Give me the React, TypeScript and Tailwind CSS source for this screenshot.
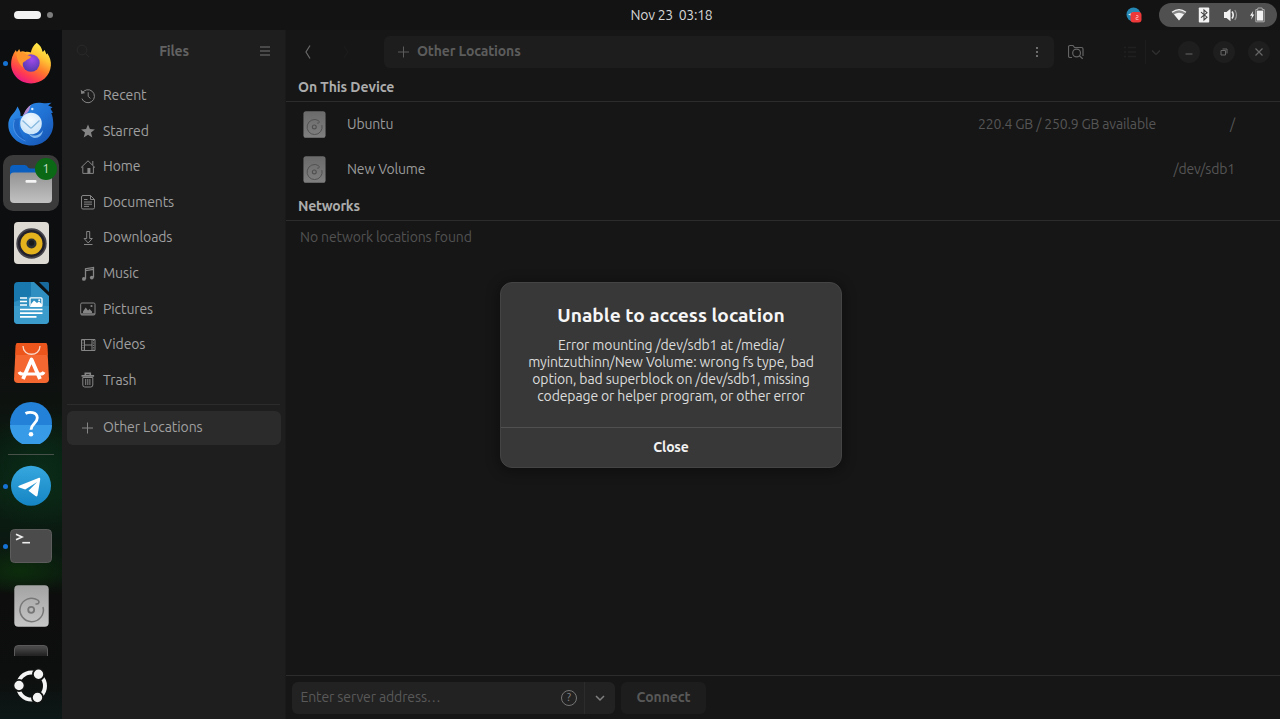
import React, { ReactNode } from "react";

type SvgProps = { className?: string; children?: ReactNode };

function Line({ className = "", children }: SvgProps) {
  return (
    <svg
      viewBox="0 0 16 16"
      width="16"
      height="16"
      fill="none"
      stroke="currentColor"
      strokeWidth="1"
      className={`shrink-0 ${className}`}
    >
      {children}
    </svg>
  );
}

const PlusIcon = ({ className = "" }: SvgProps) => (
  <Line className={className}>
    <path d="M7.500 2.500v11M2 8h11" />
  </Line>
);

const places: { name: string; icon: ReactNode }[] = [
  {
    name: "Recent",
    icon: (
      <Line>
        <path d="M2.200 5.200A6.500 6.500 0 1 1 1.900 10.600M8.200 4.200V8.400L10.400 10.400" />
        <path d="M.7 1.800l.6 4.100 4-.8z" fill="currentColor" stroke="none" />
      </Line>
    ),
  },
  {
    name: "Starred",
    icon: (
      <Line>
        <path
          d="M8 1.400l1.900 4.700 5 .3-3.900 3.200 1.300 4.900L8 11.800l-4.300 2.700L5 9.600 1.100 6.400l5-.3z"
          fill="currentColor"
          stroke="none"
        />
      </Line>
    ),
  },
  {
    name: "Home",
    icon: (
      <Line>
        <path d="M1 8.600L8 1.800l7 6.800M2.800 7.500v6.900h10.600V7.500M12.800 2v4" />
        <path d="M7.400 9h3v5.400h-3z" fill="currentColor" stroke="none" />
      </Line>
    ),
  },
  {
    name: "Documents",
    icon: (
      <Line>
        <path d="M3 1.500h7.500l4 4v8a1.500 1.500 0 0 1-1.500 1.500H3a1.500 1.500 0 0 1-1.500-1.500V3A1.500 1.500 0 0 1 3 1.500zM10.500 1.500v4h4M4 5.500h3.500M4 8h8M4 10.200h8M4 12.400h5" />
      </Line>
    ),
  },
  {
    name: "Downloads",
    icon: (
      <Line>
        <path d="M6.700 1.500h3v7h2.600L8.200 13 4.100 8.500h2.600zM4 14.500h8.500" />
      </Line>
    ),
  },
  {
    name: "Music",
    icon: (
      <Line>
        <path d="M5.500 13V2.700L13.500 1.500v10M5.500 4.600l8-1.200" strokeWidth="1.300" />
        <circle cx="3.900" cy="12.900" r="1.900" fill="currentColor" stroke="none" />
        <circle cx="11.800" cy="11.600" r="1.900" fill="currentColor" stroke="none" />
      </Line>
    ),
  },
  {
    name: "Pictures",
    icon: (
      <Line>
        <rect x=".7" y="2" width="14.300" height="12" rx="1.200" />
        <path d="M1 12h14v2H1z" fill="currentColor" stroke="none" opacity=".7" />
        <path d="M3 12v-1.500L5.700 6.500l2.300 3 1.500-1.500L12 10.500V12z" fill="currentColor" stroke="none" />
        <circle cx="11.500" cy="5" r="1.100" fill="currentColor" stroke="none" />
      </Line>
    ),
  },
  {
    name: "Videos",
    icon: (
      <Line>
        <path d="M1.500 2.500h13.500v11H1.500zM4.500 2.500v11M12 2.500v11M4.500 8H12" />
        <path d="M3 3v11M13.600 3v11" strokeDasharray="1.200 1.200" />
      </Line>
    ),
  },
  {
    name: "Trash",
    icon: (
      <Line>
        <path d="M2.800 5.500h10V13a2 2 0 0 1-2 2h-6a2 2 0 0 1-2-2zM5.700 7v6M7.800 7v6M9.900 7v6" />
        <path d="M1.500 3.900h12.600M5.300 2.900V1.400h5v1.500" strokeWidth="1.600" />
      </Line>
    ),
  },
];

function DriveArt({ className }: { className: string }) {
  return (
    <svg viewBox="0 0 35 42" className={className}>
      <defs>
        <linearGradient id="drive" x1="0" x2="0" y1="0" y2="1">
          <stop offset="0" stopColor="#a3a3a3" />
          <stop offset="1" stopColor="#c6c6c6" />
        </linearGradient>
      </defs>
      <rect x=".3" y=".3" width="34.400" height="41.400" rx="4" fill="url(#drive)" />
      <g fill="none" stroke="#777" strokeWidth="1.500">
        <path d="M23.500 14.800A11.700 11.700 0 1 0 29 22" />
        <path d="M21.500 18.800c3.200 1 4.800-2 2-4" />
        <circle cx="17.200" cy="24.800" r="3" strokeWidth="1.800" />
      </g>
    </svg>
  );
}

function Firefox() {
  return (
    <svg viewBox="0 0 42 42" width="42" height="42">
      <defs>
        <linearGradient id="ff" x1=".85" y1=".05" x2=".3" y2="1">
          <stop offset="0" stopColor="#fff34f" />
          <stop offset=".3" stopColor="#ffc334" />
          <stop offset=".55" stopColor="#ff7a2c" />
          <stop offset=".8" stopColor="#ff3a52" />
          <stop offset="1" stopColor="#e6178c" />
        </linearGradient>
        <radialGradient id="ffg" cx=".55" cy=".3" r=".7">
          <stop offset="0" stopColor="#a04bea" />
          <stop offset="1" stopColor="#5439ad" />
        </radialGradient>
      </defs>
      <path
        d="M26.700.7c3.500 2.400 5.200 5.400 5.800 9 1.200-.2 1.700-1.200 1.800-2 .9 1.300 1.700 3 2 4.800l1-1.200c2.600 4 4 8.200 3.600 12.200C40.100 34 31.700 41.400 21 41.400S1.300 33 1.100 22.200C1 17.500 2.500 12.500 5.800 8l1.100 2.600L9.200 7l1 2.800c1.600-.7 3.500-.8 5.100.1 2-.5 3.900-.2 5.500.5C21.700 6.800 23.500 3 26.700.7z"
        fill="url(#ff)"
      />
      <circle cx="21" cy="21" r="8.700" fill="url(#ffg)" />
      <path d="M6.500 9.500l3.200.6c3.600-.3 6.300 3.200 11.300 4.300-.2 2.700-4.600 2.500-5.600 4.800-2.700.4-3.700 3.600-1.700 6.600-5.400-3.300-7.700-11-7.200-16.300z" fill="#ff962d" />
    </svg>
  );
}

function Thunderbird() {
  return (
    <svg viewBox="0 0 46 44" width="46" height="44" className="translate-y-px">
      <defs>
        <linearGradient id="tb" x1="0" x2="1" y1="0" y2="1">
          <stop offset="0" stopColor="#3090ea" />
          <stop offset=".55" stopColor="#1f70d2" />
          <stop offset="1" stopColor="#1650ad" />
        </linearGradient>
        <radialGradient id="tbe" cx=".5" cy=".35" r=".65">
          <stop offset="0" stopColor="#f2f9ff" />
          <stop offset="1" stopColor="#c9e3f8" />
        </radialGradient>
      </defs>
      <path
        d="M14.500 14C17 11 18 7 21.500 4 25 .8 29 .3 34 1c3 .4 6 .4 9.500-.2l-3.300 2.600 4.300 1.800-2 1.500 2.500 4-1.700.4C44.700 14.300 45.300 18 45.300 22c0 12-9.300 21.500-21.800 21.500S.3 34.500.3 23c0-6 2.900-9.300 5.700-12.500 1.800-2 2.600-4 3.500-6 1.500 3 3.500 5.500 3 9.500z"
        fill="url(#tb)"
      />
      <path d="M16 11.500C18 7 20 4.500 23.300 2.700c-2 2.500-1.300 5-3.300 7.300-1.700 2-4 2.300-5.500 4.500z" fill="#b58bd0" />
      <path d="M6.500 17C4 26 8 34 18 39 11.500 32 9.500 24 12 16z" fill="#1a5fc0" opacity=".7" />
      <path d="M6.500 18c-3.500 10 2.500 17.500 11 21" fill="none" stroke="#6aa6f0" strokeWidth=".8" opacity=".7" />
      <path d="M20 31c5 5 12.500 2 15-3-.5 5-4 8-8 8-2 0-5-1.500-7-5z" fill="#86bdf1" />
      <circle cx="23" cy="21.500" r="10.800" fill="url(#tbe)" />
      <path d="M14.500 18.500l7.500 7q1 .9 2 0l7.500-7" fill="none" stroke="#87b9df" strokeWidth="1.300" />
      <circle cx="24.300" cy="7" r="1.200" fill="#dceefb" />
    </svg>
  );
}

function FilesArt() {
  return (
    <svg viewBox="0 0 42 40" width="42" height="40" className="translate-y-px">
      <defs>
        <linearGradient id="fold" x1="0" x2="0" y1="0" y2="1">
          <stop offset="0" stopColor="#949494" />
          <stop offset="1" stopColor="#c1c1c1" />
        </linearGradient>
      </defs>
      <path d="M0 5a4 4 0 0 1 4-4h10.500c3 0 3 3.500 6 3.500H38a4 4 0 0 1 4 4V20H0z" fill="#0b5fbe" />
      <rect y="8.500" width="42" height="30.500" rx="4" fill="url(#fold)" />
      <rect x="15.500" y="16" width="11" height="2.800" rx="1" fill="#f4f4f4" />
    </svg>
  );
}

function Rhythmbox() {
  return (
    <svg viewBox="0 0 35 42" width="35" height="42">
      <rect width="35" height="42" rx="4" fill="#dddad3" />
      <circle cx="17.500" cy="21.500" r="15.200" fill="#45434a" />
      <circle cx="17.500" cy="21.500" r="13.500" fill="#22202a" />
      <circle cx="17.500" cy="21.500" r="11" fill="#e4b21d" />
      <circle cx="17.500" cy="21.500" r="5" fill="#2b3034" />
      <circle cx="17.500" cy="21" r="2.700" fill="#17191b" />
    </svg>
  );
}

function Writer() {
  return (
    <svg viewBox="0 0 35 42" width="35" height="42">
      <path d="M4 0h14l17 15v23a4 4 0 0 1-4 4H4a4 4 0 0 1-4-4V4a4 4 0 0 1 4-4z" fill="#1978ad" />
      <path d="M17 0h3l15 14v14H0v-8L17 14z" fill="#308fc1" />
      <path d="M0 24h35v14a4 4 0 0 1-4 4H4a4 4 0 0 1-4-4z" fill="#3b9bca" />
      <path d="M25 0h8.500q1.500 0 1.500 1.500V10z" fill="#196a9c" />
      <path d="M6 16h7M6 19.500h7M6 23h7M6 27.500h22.500M6 31.200h22.500M6 34.900h16.500" stroke="#fff" strokeWidth="1.700" />
      <rect x="16" y="15.800" width="12" height="8.600" rx="1" fill="none" stroke="#fff" strokeWidth="1.300" />
      <path d="M17 24v-2l3-3.500 3 2.500 2-1.500 3 3V24z" fill="#fff" />
      <circle cx="25.200" cy="18.300" r="1" fill="#fff" />
    </svg>
  );
}

function AppCenter() {
  return (
    <svg viewBox="0 0 35 40" width="35" height="40">
      <path d="M4 0h27q2 0 2.200 2L35 36q0 4-4 4H4q-4 0-4-4L1.800 2Q2 0 4 0z" fill="#f46730" />
      <path d="M4 0h27q2 0 2.200 2l.4 10H1.400L1.800 2Q2 0 4 0z" fill="#ec561d" />
      <path d="M9 3c0 11 17 11 17 0" fill="none" stroke="#f7d8c9" strokeWidth="1.300" />
      <path d="M9 36L17.500 16.500 26 36" fill="none" stroke="#fff" strokeWidth="3.800" strokeLinejoin="round" />
      <path d="M5 29q1 2 3.500 2h18q2.500 0 3.500-2" fill="none" stroke="#fff" strokeWidth="3.200" />
    </svg>
  );
}

function Help() {
  return (
    <svg viewBox="0 0 42 42" width="42" height="42">
      <circle cx="21" cy="21" r="21" fill="#2382d8" />
      <path d="M0 23h42A21 21 0 0 1 0 23z" fill="#379be8" />
      <path d="M15.500 11.500c3.500-2 11.500-1.800 11.800 4.200.2 5.500-6.300 6-6.300 12" fill="none" stroke="#fff" strokeWidth="2.800" />
      <circle cx="21" cy="32.300" r="2.300" fill="#fff" />
    </svg>
  );
}

function Telegram() {
  return (
    <svg viewBox="0 0 42 42" width="42" height="42">
      <defs>
        <linearGradient id="tg" x1="0" x2="0" y1="0" y2="1">
          <stop offset="0" stopColor="#36a7de" />
          <stop offset="1" stopColor="#1685c4" />
        </linearGradient>
      </defs>
      <circle cx="21" cy="20.700" r="20" fill="url(#tg)" />
      <path d="M9 20.700l19.500-7.800c1.200-.4 2 .2 1.700 1.700L27.600 30c-.2 1.500-1 1.700-2.100 1l-7-5.300 8.700-8.600-12 7.500-5.800-2c-1.400-.6-1.400-1.300-.4-1.900z" fill="#fff" />
    </svg>
  );
}

function Terminal() {
  return (
    <svg viewBox="0 0 42 34" width="42" height="34">
      <rect x=".5" y=".5" width="41" height="33" rx="4" fill="#4b4b4b" stroke="#5c5c5c" />
      <path d="M6 5.200l6 2.800-6 2.800" fill="none" stroke="#eee" strokeWidth="1.700" />
      <path d="M12.300 13.700H20" stroke="#eee" strokeWidth="1.600" />
    </svg>
  );
}

function UbuntuMark() {
  return (
    <svg viewBox="0 0 36 36" width="36" height="36">
      <circle cx="18.500" cy="18" r="13.500" fill="none" stroke="#f4f4f4" strokeWidth="4" />
      <g fill="#f4f4f4" stroke="#121413" strokeWidth="1.800">
        <circle cx="6" cy="17.500" r="5.600" />
        <circle cx="25.500" cy="6.300" r="5.600" />
        <circle cx="24.500" cy="29.500" r="5.600" />
      </g>
    </svg>
  );
}

function DockSlot({ running = false, children }: { running?: boolean; children: ReactNode }) {
  return (
    <div className="relative flex h-[60px] shrink-0 items-center justify-center">
      {running && <span className="absolute left-[3px] top-[28px] size-[5px] rounded-full bg-[#1673d4]" />}
      {children}
    </div>
  );
}

function Dock() {
  return (
    <nav className="flex w-[62px] shrink-0 flex-col bg-[radial-gradient(50px_24px_at_20px_540px,#0c2c0c,transparent),radial-gradient(60px_60px_at_40px_440px,#0a2c18,transparent),linear-gradient(180deg,#0d0e0f_0,#0d0e0f_45%,#0e120f_54%,#081c10_62%,#0a2212_67%,#0a1811_74%,#0b1c0f_79%,#0c0d0c_82%,#0d0f0e_94%,#0c1817_100%)] pt-[3px]">
      <DockSlot running><Firefox /></DockSlot>
      <DockSlot><Thunderbird /></DockSlot>
      <DockSlot running>
        <div className="relative flex size-14 items-center justify-center rounded-[10px] bg-[#3b3b3c]">
          <FilesArt />
          <span className="absolute right-[2px] top-[3px] flex size-[22px] items-center justify-center rounded-full bg-[#0b6815] text-[13px] text-[#c9dfca]">1</span>
        </div>
      </DockSlot>
      <DockSlot><Rhythmbox /></DockSlot>
      <DockSlot><Writer /></DockSlot>
      <DockSlot><AppCenter /></DockSlot>
      <DockSlot><Help /></DockSlot>
      <div className="mx-2 my-px h-px shrink-0 bg-[#475149]" />
      <DockSlot running><Telegram /></DockSlot>
      <DockSlot running><Terminal /></DockSlot>
      <DockSlot><DriveArt className="h-[42px] w-[35px]" /></DockSlot>
      <div className="flex h-5 shrink-0 justify-center overflow-hidden pt-[9px]">
        <div className="h-5 w-[34px] rounded-t-[4px] border border-[#5a5a5a] bg-linear-to-b from-[#484848] from-10% to-[#242424] to-50%" />
      </div>
      <DockSlot><UbuntuMark /></DockSlot>
    </nav>
  );
}

function TopBar() {
  return (
    <header className="grid h-[30px] shrink-0 grid-cols-[1fr_auto_1fr] items-center bg-[#131313]">
      <div className="flex items-center gap-[6px] pl-[14px]">
        <span className="h-[8px] w-[27px] rounded-full bg-[#f2f2f2]" />
        <span className="size-[6px] rounded-full bg-[#7d7d7d]" />
      </div>
      <div className="mb-px ml-[63px] flex w-[82px] justify-between whitespace-pre text-[14px] leading-5 tracking-[-0.25px] text-[#d6d6d6]">
        <span>Nov 23</span>
        <span>03:18</span>
      </div>
      <div className="flex items-center justify-end pr-[3px]">
        <svg viewBox="0 0 16 16" width="16" height="16" className="mr-[17px]">
          <circle cx="7.500" cy="7.500" r="7" fill="#2688b5" />
          <path d="M2 7.500l5-2v4z" fill="#dcecf3" />
          <rect x="4.500" y="5" width="11" height="10.500" rx="3" fill="#ed3939" />
          <path d="M10 8.500h2v2h-2v2h2.500" fill="none" stroke="#ffb2b2" strokeWidth=".8" />
        </svg>
        <div className="flex h-6 w-[118px] items-center rounded-full bg-[#505050] pl-3 text-[#f2f2f2]">
          <svg viewBox="0 0 16 16" width="16" height="16">
            <path d="M1 5.500Q8 .1 15 5.500L8 13.500z" fill="currentColor" opacity=".35" />
            <path d="M3 7.200Q8 4.200 13 7.200L8 13.500z" fill="currentColor" />
            <path d="M1 5.300Q8-.1 15 5.300" fill="none" stroke="currentColor" strokeWidth="1.200" />
          </svg>
          <svg viewBox="0 0 12 16" width="12" height="16" className="ml-[11px]">
            <rect x=".8" y=".5" width="10.400" height="15" rx=".8" fill="currentColor" />
            <path d="M3 5.200l6 5-3 2.800V3l3 2.700-6 5" fill="none" stroke="#444" strokeWidth="1.100" />
          </svg>
          <svg viewBox="0 0 16 16" width="16" height="16" className="ml-[13px]">
            <path d="M1 5h2.500L7.500 1.700v12.600L3.500 11H1z" fill="currentColor" />
            <path d="M9 4.500q2.400 3.500 0 7" fill="none" stroke="currentColor" strokeWidth="1.600" />
            <path d="M11.800 3q3.400 5 0 10" fill="none" stroke="#999" strokeWidth="1.200" />
          </svg>
          <svg viewBox="0 0 16 16" width="16" height="16" className="ml-[10px]">
            <path d="M4.200 4L1 8.700h2L2.100 12.500 5.300 7.500H3.500z" fill="currentColor" />
            <path d="M6.800 2.500h2V1h4.400v1.500h2v12.300H6.800z" fill="none" stroke="#aaa" strokeWidth="1" />
            <rect x="7.900" y="3.600" width="6.200" height="10" fill="currentColor" />
          </svg>
        </div>
      </div>
    </header>
  );
}

function Sidebar() {
  return (
    <aside className="flex w-56 shrink-0 flex-col border-r border-[#1a1a1a] bg-[#1e1e1e] text-[#a0a0a0]">
      <div className="flex h-[42px] shrink-0 items-center justify-between pl-[13px] pr-[12px]">
        <Line className="text-[#292929]"><circle cx="7" cy="7" r="4.800" /><path d="M10.500 10.500L14 14" /></Line>
        <span className="text-[14px] font-semibold tracking-[-0.2px] text-[#626262]">Files</span>
        <Line className="text-[#747474]"><path d="M3 4h10M3 8h10M3 12h10" /></Line>
      </div>
      <ul className="mt-[6px]">
        {places.map((p) => (
          <li key={p.name} className="flex h-[35.560px] items-center pl-[18px] text-[14px] tracking-[-0.1px]">
            <span className="text-[#858585]">{p.icon}</span>
            <span className="ml-[7px]">{p.name}</span>
          </li>
        ))}
      </ul>
      <div className="mx-[5px] mt-[6px] h-px bg-[#2c2c2c]" />
      <div className="ml-[5px] mr-1 mt-[6px] flex h-[34px] items-center rounded-md bg-[#2b2b2b] pl-[13px] text-[14px] tracking-[-0.08px]">
        <PlusIcon className="text-[#858585]" />
        <span className="ml-[7px]">Other Locations</span>
      </div>
    </aside>
  );
}

function WindowButton({ children }: SvgProps) {
  return (
    <span className="flex size-[22px] items-center justify-center rounded-full bg-[#1e1e1e] text-[#666]">
      <Line>{children}</Line>
    </span>
  );
}

function Volume({ name, space, mount }: { name: string; space?: string; mount: string }) {
  return (
    <div className="flex h-[45px] items-center pl-[17px] pr-[45px] text-[14px] tracking-[-0.16px]">
      <DriveArt className="h-[27px] w-[23px] opacity-60" />
      <span className="ml-[21px] text-[#9b9b9b]">{name}</span>
      <span className="ml-auto text-[#555]">{space}</span>
      <span className="w-[79px] text-right text-[#555]">{mount}</span>
    </div>
  );
}

function Browser() {
  return (
    <main className="flex min-w-0 flex-1 flex-col bg-[#161616]">
      <div className="flex h-[43px] shrink-0 items-center pl-[14px] pr-[10.500px]">
        <Line className="text-[#696969]"><path d="M10 1.500L6 8l4 6.500" strokeWidth="1.200" /></Line>
        <Line className="ml-[22px] text-[#1d1d1d]"><path d="M6 2l4 6-4 6" /></Line>
        <div className="ml-[30px] flex h-8 w-[670px] items-center rounded-md bg-[#1d1d1d] pl-[12px] pr-[9px] text-[#5c5c5c]">
          <PlusIcon />
          <span className="ml-[5px] text-[14px] font-semibold tracking-[-0.15px]">Other Locations</span>
          <Line className="ml-auto text-[#777]">
            <path d="M8 3v2M8 7v2M8 11v2" strokeWidth="1.800" />
          </Line>
        </div>
        <Line className="ml-[14px] text-[#646464]">
          <path d="M4 13.500H2A1.500 1.500 0 0 1 .5 12V3A1.500 1.500 0 0 1 2 1.500h3l1.500 2h7A1.500 1.500 0 0 1 15 5v7" strokeWidth="1.200" />
          <circle cx="8.600" cy="9" r="3.900" strokeWidth="1.200" />
          <path d="M11.400 11.800l3.300 3" strokeWidth="1.200" />
        </Line>
        <Line className="ml-[38px] text-[#202020]"><path d="M2 3.500h2M6 3.500h8M2 8h2M6 8h8M2 12.500h2M6 12.500h8" strokeWidth="1.300" /></Line>
        <span className="ml-[7px] h-6 w-px bg-[#1d1d1d]" />
        <Line className="ml-[2px] text-[#303030]"><path d="M4 6.500l4 4 4-4" strokeWidth="1.200" /></Line>
        <div className="ml-auto flex gap-[13px]">
          <WindowButton><path d="M4.500 10h7" /></WindowButton>
          <WindowButton><path d="M5 6.500h4.500V11H5zM6.500 5H11v4.500" /></WindowButton>
          <WindowButton><path d="M4.500 4.500l7 7M11.500 4.500l-7 7" strokeWidth="1.200" /></WindowButton>
        </div>
      </div>
      <section>
        <h2 className="flex h-[29px] items-center border-b border-[#2c2c2c] pl-3 text-[14px] font-semibold tracking-[-0.07px] text-[#acacac]">On This Device</h2>
        <Volume name="Ubuntu" space="220.4 GB / 250.9 GB available" mount="/" />
        <Volume name="New Volume" mount="/dev/sdb1" />
      </section>
      <section>
        <h2 className="flex h-[29px] items-center border-b border-[#2c2c2c] pl-3 text-[14px] font-semibold tracking-[-0.3px] text-[#acacac]">Networks</h2>
        <p className="pl-[14px] pt-[6px] text-[14px] leading-5 tracking-[-0.12px] text-[#525252]">No network locations found</p>
      </section>
      <footer className="mt-auto flex h-11 shrink-0 items-center gap-[6px] border-t border-[#2c2c2c] pl-[6px]">
        <div className="flex h-8 w-[323px] items-center overflow-hidden rounded-md bg-[#222]">
          <span className="pl-[8.500px] text-[14px] tracking-[-0.12px] text-[#595959]">Enter server address…</span>
          <span className="ml-auto mr-[7px] flex size-4 items-center justify-center rounded-full border border-[#757575] text-[11px] leading-none text-[#858585]">?</span>
          <span className="flex h-full w-[31px] items-center justify-center border-l border-[#2c2c2c] text-[#808080]">
            <Line><path d="M4 6l4 4 4-4" strokeWidth="1.500" /></Line>
          </span>
        </div>
        <div className="flex h-8 w-[85px] items-center justify-center rounded-md bg-[#1d1d1d] text-[14px] font-semibold tracking-[-0.08px] text-[#585858]">Connect</div>
      </footer>
    </main>
  );
}

function ErrorDialog() {
  return (
    <div role="dialog" className="absolute left-[500px] top-[282px] flex h-[186px] w-[342px] flex-col items-center rounded-[12px] border border-[#444] bg-[#383838] shadow-[0_2px_12px_3px_rgba(0,0,0,0.3)]">
      <h1 className="mt-[19px] whitespace-nowrap text-[19.200px] font-bold leading-[26px] text-[#f6f6f6]">Unable to access location</h1>
      <div className="mt-[9px] flex flex-col items-center whitespace-nowrap text-[14px] leading-[17px] tracking-[-0.13px] text-[#dcdcdc]">
        <span>Error mounting /dev/sdb1 at /media/</span>
        <span>myintzuthinn/New Volume: wrong fs type, bad</span>
        <span>option, bad superblock on /dev/sdb1, missing</span>
        <span>codepage or helper program, or other error</span>
      </div>
      <button className="mt-auto h-[40px] w-full border-t border-[#505050] text-[14px] font-semibold tracking-[-0.2px] text-[#f2f2f2]">Close</button>
    </div>
  );
}

export default function App() {
  return (
    <div className="relative flex h-[719px] w-[1280px] flex-col overflow-hidden bg-[#131313] font-['Ubuntu','Noto_Sans',sans-serif]">
      <TopBar />
      <div className="flex min-h-0 flex-1">
        <Dock />
        <Sidebar />
        <Browser />
      </div>
      <ErrorDialog />
    </div>
  );
}
